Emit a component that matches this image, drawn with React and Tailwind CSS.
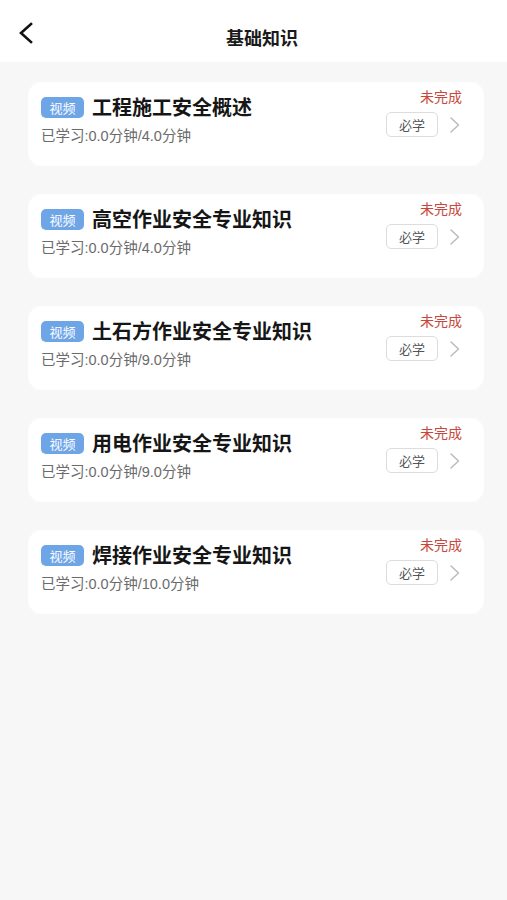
const ITEMS = [
  { title: '工程施工安全概述', done: '0.0', total: '4.0' },
  { title: '高空作业安全专业知识', done: '0.0', total: '4.0' },
  { title: '土石方作业安全专业知识', done: '0.0', total: '9.0' },
  { title: '用电作业安全专业知识', done: '0.0', total: '9.0' },
  { title: '焊接作业安全专业知识', done: '0.0', total: '10.0' },
];

const FONT = { fontFamily: '"Noto Sans CJK SC", "Noto Sans", sans-serif' };
const NUM_FONT = { fontFamily: '"Liberation Sans", "Noto Sans CJK SC", sans-serif' };

function RightArrow({ className }) {
  return (
    <svg viewBox="0 0 14 18" fill="none" stroke="currentColor" strokeWidth="1.6" strokeLinecap="round" strokeLinejoin="round" className={className}>
      <polyline points="3 2 10.5 9 3 16" />
    </svg>
  );
}

function LessonCard({ item }) {
  return (
    <div className="bg-white rounded-[14px] h-[84px] flex justify-between pl-[13px] pr-[22px]">
      {/* left: tag + title + progress */}
      <div className="pt-[13px]">
        <div className="flex items-center">
          <span className="w-[43px] h-[21px] rounded-[5px] bg-[#6ea5e7] text-white text-[13px] leading-[21px] text-center">视频</span>
          <span className="ml-[8px] text-[20px] font-bold text-[#161616] leading-[24px]">{item.title}</span>
        </div>
        <div className="mt-[8px] text-[14.5px] text-[#6b6b6b] leading-[18px]" style={NUM_FONT}>
          已学习:{item.done}分钟/{item.total}分钟
        </div>
      </div>

      {/* right: status + required tag */}
      <div className="flex flex-col items-end pt-[5px]">
        <span className="text-[14px] text-[#c8473c] leading-[18px]">未完成</span>
        <div className="flex items-center mt-[7px]">
          <span className="w-[52px] h-[25px] rounded-[5px] border border-[#dddddd] text-[13px] text-[#555] leading-[23px] text-center">必学</span>
          <RightArrow className="w-[14px] h-[18px] ml-[10px] text-[#bdbdbd]" />
        </div>
      </div>
    </div>
  );
}

export default function App() {
  return (
    <div className="w-[507px] h-[900px] bg-[#f7f7f7]" style={FONT}>
      {/* Header */}
      <div className="h-[62px] bg-white relative">
        <svg viewBox="0 0 16 24" fill="none" stroke="#111" strokeWidth="2.6" strokeLinecap="square" strokeLinejoin="miter" className="absolute left-[18px] top-[21px] w-[16px] h-[24px]">
          <polyline points="13 3 3 12 13 21" />
        </svg>
        <h1 className="w-full text-center text-[18px] font-bold text-[#1a1a1a] pl-[17px] pt-[24px] leading-[26px]">基础知识</h1>
      </div>

      {/* Lesson list */}
      <div className="pl-[28px] pr-[23px] pt-[20px] flex flex-col gap-[28px]">
        {ITEMS.map((item) => (
          <LessonCard key={item.title} item={item} />
        ))}
      </div>
    </div>
  );
}
